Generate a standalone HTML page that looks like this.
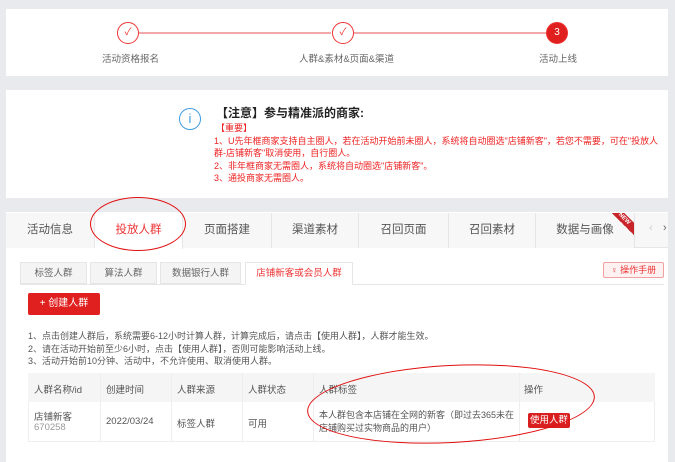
<!DOCTYPE html><html><head><meta charset="utf-8"><style>
*{margin:0;padding:0;box-sizing:border-box}
body{width:675px;height:453px;background:#e9eaee;font-family:"Liberation Sans","Noto Sans CJK SC",sans-serif;position:relative;overflow:hidden;color:#333}
.a{position:absolute}
.card{position:absolute;background:#fff;left:6px;width:662px}
.circ{position:absolute;width:22px;height:22px;border:1px solid #e33;border-radius:50%;text-align:center;line-height:20px;color:#e33;font-size:10px;background:#fff}
.lbl{position:absolute;font-size:9.5px;color:#666;top:42px;white-space:nowrap}
.red{color:#e22;font-size:9px;line-height:12.5px}
.tab{position:absolute;top:213px;height:35px;line-height:35px;text-align:center;font-size:11.5px;color:#555;border-right:1px solid #e6e6e6;background:#f7f7f7}
.st{position:absolute;top:262px;height:22px;line-height:22px;text-align:center;font-size:9.5px;color:#666;background:#f4f4f4;border:1px solid #e6e6e6}
.th,.td{position:absolute;font-size:9.5px;color:#555}
</style></head><body>
<div class="card" style="top:9px;height:67px">
 <div class="a" style="left:133px;top:23px;width:192px;height:2px;background:#f3a9a9"></div>
 <div class="a" style="left:348px;top:23px;width:192px;height:2px;background:#f3a9a9"></div>
 <div class="circ" style="left:111px;top:13px">✓</div>
 <div class="circ" style="left:326px;top:13px">✓</div>
 <div class="circ" style="left:540px;top:13px;background:#e0201f;color:#fff">3</div>
 <div class="lbl" style="left:96px">活动资格报名</div>
 <div class="lbl" style="left:293px">人群&amp;素材&amp;页面&amp;渠道</div>
 <div class="lbl" style="left:533px">活动上线</div>
</div>
<div class="card" style="top:90px;height:108px">
 <div class="a" style="left:173px;top:18px;width:22px;height:22px;border:1.5px solid #3a9be0;border-radius:50%;color:#3a9be0;text-align:center;font-size:13px;line-height:19px">i</div>
 <div class="a" style="left:210px;top:14px;font-size:12px;font-weight:bold;color:#222">【注意】参与精准派的商家:</div>
 <div class="a red" style="left:210px;top:32px">【重要】</div>
 <div class="a red" style="left:208px;top:44.5px;width:455px">1、U先年框商家支持自主圈人，若在活动开始前未圈人，系统将自动圈选"店铺新客"，若您不需要，可在"投放人群-店铺新客"取消使用，自行圈人。<br>2、非年框商家无需圈人，系统将自动圈选"店铺新客"。<br>3、通投商家无需圈人。</div>
</div>
<div class="card" style="top:212px;height:250px"></div>
<div class="a" style="left:6px;top:213px;width:662px;height:35px;background:#f7f7f7;border-bottom:1px solid #e6e6e6"></div>
<div class="tab" style="left:6px;width:89px">活动信息</div>
<div class="tab" style="left:95px;width:88px;background:#fff;color:#e33;height:36px">投放人群</div>
<div class="tab" style="left:183px;width:89px">页面搭建</div>
<div class="tab" style="left:272px;width:87px">渠道素材</div>
<div class="tab" style="left:359px;width:90px">召回页面</div>
<div class="tab" style="left:449px;width:87px">召回素材</div>
<div class="tab" style="left:536px;width:99px">数据与画像</div>
<div class="a" style="left:612px;top:213px;width:22px;height:22px;background:linear-gradient(45deg,transparent 50%,#c8242a 50%,#c8242a 78%,transparent 78%)"></div>
<div class="a" style="left:617px;top:216px;font-size:6px;color:#fff;transform:rotate(45deg);font-weight:bold">NEW</div>
<div class="a" style="left:649px;top:222px;color:#ccc;font-size:11px">‹</div>
<div class="a" style="left:663px;top:222px;color:#666;font-size:11px">›</div>
<div class="a" style="left:20px;top:284px;width:644px;height:1px;background:#e6e6e6"></div>
<div class="st" style="left:20px;width:67px">标签人群</div>
<div class="st" style="left:90px;width:67px">算法人群</div>
<div class="st" style="left:160px;width:81px">数据银行人群</div>
<div class="st" style="left:245px;width:108px;background:#fff;color:#e33;border-bottom-color:#fff;height:23px">店铺新客或会员人群</div>
<div class="a" style="left:603px;top:262px;width:61px;height:16px;border:1px solid #f2a0a0;background:#fdf1f1;border-radius:2px;color:#e33;font-size:9px;text-align:center;line-height:14px">♀ 操作手册</div>
<div class="a" style="left:28px;top:293px;width:72px;height:22px;background:#e0201f;color:#fff;font-size:10px;text-align:center;line-height:22px;border-radius:2px">+ 创建人群</div>
<div class="a" style="left:28px;top:330px;font-size:9px;line-height:12.5px;color:#555">1、点击创建人群后，系统需要6-12小时计算人群，计算完成后，请点击【使用人群】，人群才能生效。<br>2、请在活动开始前至少6小时，点击【使用人群】，否则可能影响活动上线。<br>3、活动开始前10分钟、活动中，不允许使用、取消使用人群。</div>
<div class="a" style="left:28px;top:373px;width:627px;height:69px;border:1px solid #eee"></div>
<div class="a" style="left:28px;top:373px;width:627px;height:29px;background:#f5f5f5"></div>
<div class="a" style="left:100px;top:373px;width:1px;height:69px;background:#eee"></div>
<div class="a" style="left:171px;top:373px;width:1px;height:69px;background:#eee"></div>
<div class="a" style="left:242px;top:373px;width:1px;height:69px;background:#eee"></div>
<div class="a" style="left:313px;top:373px;width:1px;height:69px;background:#eee"></div>
<div class="a" style="left:519px;top:373px;width:1px;height:69px;background:#eee"></div>
<div class="th" style="left:34px;top:382px">人群名称/id</div>
<div class="th" style="left:106px;top:382px">创建时间</div>
<div class="th" style="left:177px;top:382px">人群来源</div>
<div class="th" style="left:248px;top:382px">人群状态</div>
<div class="th" style="left:319px;top:382px">人群标签</div>
<div class="th" style="left:524px;top:382px">操作</div>
<div class="td" style="left:34px;top:409px">店铺新客</div>
<div class="td" style="left:34px;top:422px;color:#999">670258</div>
<div class="td" style="left:106px;top:416px">2022/03/24</div>
<div class="td" style="left:177px;top:416px">标签人群</div>
<div class="td" style="left:248px;top:416px">可用</div>
<div class="td" style="left:319px;top:409px;width:198px;line-height:13px;font-size:9px">本人群包含本店铺在全网的新客（即过去365未在店铺购买过实物商品的用户）</div>
<div class="a" style="left:528px;top:413px;width:42px;height:15px;background:#d81e1e;color:#fff;font-size:9.5px;text-align:center;line-height:15px;border-radius:2px">使用人群</div>
<div class="a" style="left:90px;top:197px;width:96px;height:54px;border:1.5px solid #e01010;border-radius:50%"></div>
<div class="a" style="left:307px;top:365px;width:288px;height:78px;border:1.5px solid #e01010;border-radius:50%;transform:rotate(-3deg)"></div>
</body></html>
